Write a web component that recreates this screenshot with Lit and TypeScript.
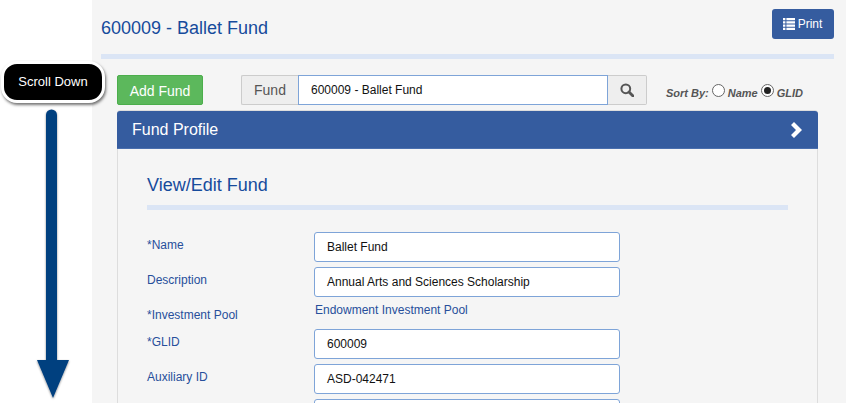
import { LitElement, html, css } from "lit";
import { customElement } from "lit/decorators.js";

const fields = [
  { label: "*Name", value: "Ballet Fund" },
  { label: "Description", value: "Annual Arts and Sciences Scholarship" },
  { label: "*Investment Pool", text: "Endowment Investment Pool" },
  { label: "*GLID", value: "600009" },
  { label: "Auxiliary ID", value: "ASD-042471" },
  { label: "", value: "" },
];

@customElement("app-root")
export class AppRoot extends LitElement {
  static styles = css`
    :host { display: block; width: 846px; height: 403px; overflow: hidden; position: relative; background: #fff;
      font-family: "Liberation Sans", Arial, sans-serif; }
    * { box-sizing: border-box; }
    .main { margin-left: 92px; height: 403px; background: #f5f5f5; padding: 9px 12px 0 9px; overflow: hidden; }
    .top { display: flex; justify-content: space-between; height: 39px; }
    h1 { margin: 9px 0 0; font-weight: 400; font-size: 18px; line-height: 20px; color: #164b9c; }
    .print { width: 62px; height: 30px; background: #355c9f; border-radius: 3px; color: #fff; font-size: 12px;
      display: flex; align-items: center; justify-content: center; gap: 3px; padding-right: 1px; }
    .rule { height: 5px; background: #dbe5f5; }
    .rule.top-rule { margin-top: 6px; }
    .content { padding-left: 16px; width: 718px; }
    .toolbar { display: flex; align-items: flex-start; margin-top: 16px; height: 30px; }
    .add { width: 86px; height: 30px; background: #5cb85c; border: 1px solid #4cae4c; border-radius: 2px; color: #fff;
      font-size: 14px; display: flex; align-items: center; justify-content: center; padding-top: 2px; }
    .group { display: flex; margin-left: 38px; height: 30px; }
    .addon { width: 57px; background: #eee; border: 1px solid #ccc; border-right: 0; border-radius: 2px 0 0 2px; color: #555;
      font-size: 14px; display: flex; align-items: center; justify-content: center; }
    .search-input { width: 310px; background: #fff; border: 1px solid #7ea4d8; color: #111; font-size: 12px;
      display: flex; align-items: center; padding: 0 0 1px 12px; }
    .search { width: 39px; background: #eee; border: 1px solid #ccc; border-left: 0; border-radius: 0 2px 2px 0;
      display: flex; align-items: center; justify-content: center; padding-right: 1px; }
    .sort { margin-left: 19px; margin-top: 9px; display: flex; align-items: flex-start; gap: 3px; color: #555;
      font-size: 11px; font-weight: 700; font-style: italic; height: 18px; }
    .sort span { padding-top: 3px; }
    .radio { width: 13px; height: 13px; border-radius: 50%; border: 1px solid #666; background: #fff;
      display: flex; align-items: center; justify-content: center; }
    .radio i { width: 7px; height: 7px; border-radius: 50%; background: #222; display: block; }
    .panel { margin-top: 5px; width: 701px; border: 1px solid #ddd; border-radius: 3px 3px 0 0; height: 300px; }
    .panel-head { margin: 0 -1px; height: 38px; background: #355c9f; border-radius: 3px 3px 0 0; color: #fff; font-size: 16px;
      display: flex; align-items: center; justify-content: space-between; padding: 0 15px; border-bottom: 1px solid #4a6fae; }
    .panel-body { padding: 0 29px; }
    h2 { margin: 26px 0 0; font-weight: 400; font-size: 18px; line-height: 20px; color: #164b9c; }
    .panel-body .rule { margin-top: 10px; width: 641px; background: #dbe5f5; }
    .form { margin-top: 22px; display: grid; grid-template-columns: 167px 306px; }
    .label { color: #274f9b; font-size: 12px; height: 35px; padding-top: 6px; }
    .value { height: 30px; margin-bottom: 5px; border: 1px solid #7ea4d8; border-radius: 3px; background: #fff; color: #111;
      font-size: 12px; display: flex; align-items: center; padding-left: 12px; }
    .plain { color: #274f9b; font-size: 12px; height: 27px; padding: 1px 0 0 1px; }
    .label.short { height: 27px; padding-top: 6px; }
    .callout { position: absolute; left: 1px; top: 61px; width: 104px; height: 42px; background: #000; border: 3px solid #fff;
      border-radius: 16px; box-shadow: 1px 2px 3px rgba(0,0,0,.55); color: #fff; font-size: 13px;
      display: flex; align-items: center; justify-content: center; padding-bottom: 1px; }
    .arrow { position: absolute; left: 32px; top: 106px; overflow: visible; }
  `;

  render() {
    return html`
      <div class="main">
        <div class="top">
          <h1>600009 - Ballet Fund</h1>
          <div class="print">
            <svg width="12" height="12" viewBox="0 0 12 12" fill="#fff"><path d="M0 0h2.4v2.2H0zM3.4 0H12v2.2H3.4zM0 3.2h2.4v2.4H0zM3.4 3.2H12v2.4H3.4zM0 6.6h2.4v2.2H0zM3.4 6.6H12v2.2H3.4zM0 9.8h2.4V12H0zM3.4 9.8H12V12H3.4z"/></svg>
            Print
          </div>
        </div>
        <div class="rule top-rule"></div>
        <div class="content">
          <div class="toolbar">
            <div class="add">Add Fund</div>
            <div class="group">
              <div class="addon">Fund</div>
              <div class="search-input">600009 - Ballet Fund</div>
              <div class="search">
                <svg width="14" height="14" viewBox="0 0 14 14" fill="none" stroke="#555"><circle cx="5.8" cy="5.8" r="4.4" stroke-width="2"/><path d="M9 9l4 4" stroke-width="2.8" stroke-linecap="round"/></svg>
              </div>
            </div>
            <div class="sort">
              <span>Sort By:</span><div class="radio"></div><span>Name</span><div class="radio"><i></i></div><span>GLID</span>
            </div>
          </div>
          <div class="panel">
            <div class="panel-head">
              <span>Fund Profile</span>
              <svg width="13" height="16" viewBox="0 0 13 16" fill="#fff"><path d="M4 0l8 8-8 8-3-3 5-5-5-5z"/></svg>
            </div>
            <div class="panel-body">
              <h2>View/Edit Fund</h2>
              <div class="rule"></div>
              <div class="form">
                ${fields.map((f) =>
                  f.text
                    ? html`<div class="label short">${f.label}</div><div class="plain">${f.text}</div>`
                    : html`<div class="label">${f.label}</div><div class="value">${f.value}</div>`
                )}
              </div>
            </div>
          </div>
        </div>
      </div>
      <div class="callout">Scroll Down</div>
      <svg class="arrow" width="40" height="296" viewBox="0 0 40 296">
        <defs><filter id="s" x="-30%" y="-5%" width="160%" height="110%"><feDropShadow dx="0" dy="1" stdDeviation="1.200" flood-color="#000" flood-opacity=".45"/></filter></defs>
        <path filter="url(#s)" fill="#003f7f" d="M14 9a5.500 5.500 0 0 1 11 0V254h12L21 292 5 254h9z"/>
      </svg>
    `;
  }
}
